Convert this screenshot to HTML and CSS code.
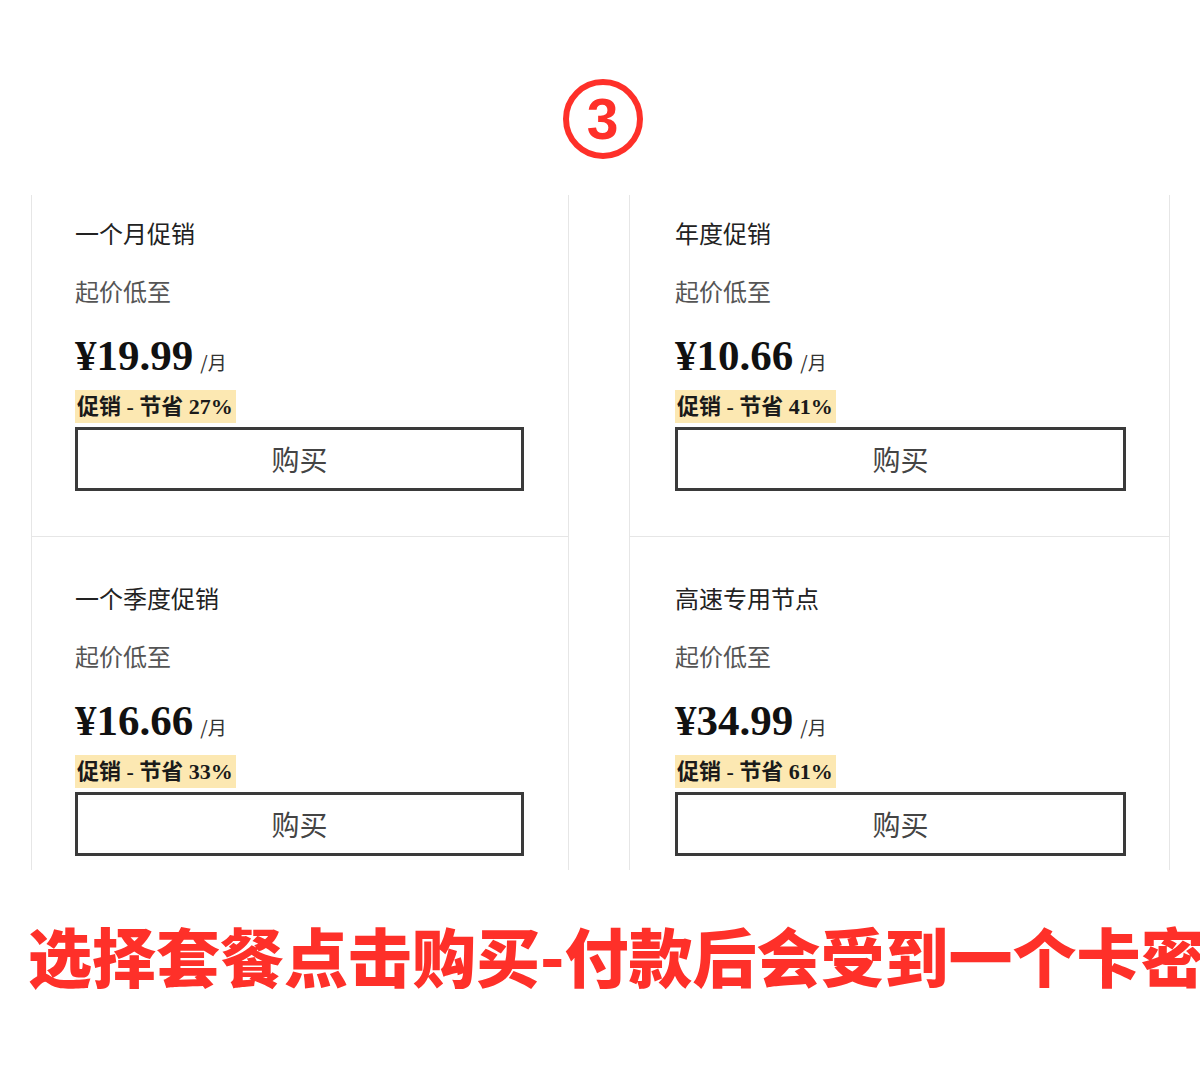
FILE: index.html
```html
<!DOCTYPE html>
<html lang="zh-CN">
<head>
    <meta charset="UTF-8">
    <meta name="viewport" content="width=device-width, initial-scale=1.0">
    <title>选择套餐</title>
    <link rel="stylesheet" href="styles.css">
</head>
<body>
    <header class="step">
        <div class="step-badge">3</div>
    </header>

    <section class="plans">
        <div class="plan-col">
            <div class="plan plan-top">
                <h3 class="plan-name">一个月促销</h3>
                <p class="plan-from">起价低至</p>
                <div class="plan-price"><span class="amount">¥19.99</span><span class="unit">/月</span></div>
                <div class="plan-save"><span>促销 - 节省 27%</span></div>
                <button class="buy-btn">购买</button>
            </div>
            <div class="plan plan-bottom">
                <h3 class="plan-name">一个季度促销</h3>
                <p class="plan-from">起价低至</p>
                <div class="plan-price"><span class="amount">¥16.66</span><span class="unit">/月</span></div>
                <div class="plan-save"><span>促销 - 节省 33%</span></div>
                <button class="buy-btn">购买</button>
            </div>
        </div>

        <div class="plan-col plan-col-right">
            <div class="plan plan-top">
                <h3 class="plan-name">年度促销</h3>
                <p class="plan-from">起价低至</p>
                <div class="plan-price"><span class="amount">¥10.66</span><span class="unit">/月</span></div>
                <div class="plan-save"><span>促销 - 节省 41%</span></div>
                <button class="buy-btn">购买</button>
            </div>
            <div class="plan plan-bottom">
                <h3 class="plan-name">高速专用节点</h3>
                <p class="plan-from">起价低至</p>
                <div class="plan-price"><span class="amount">¥34.99</span><span class="unit">/月</span></div>
                <div class="plan-save"><span>促销 - 节省 61%</span></div>
                <button class="buy-btn">购买</button>
            </div>
        </div>
    </section>

    <p class="caption">选择套餐点击购买-付款后会受到一个卡密</p>
</body>
</html>
```

FILE: styles.css
```css
:root {
    --red: #fe3029;
    --line: #e6e6e6;
    --dark: #222222;
    --gray: #555555;
}

* {
    margin: 0;
    padding: 0;
    box-sizing: border-box;
}

body {
    background: #ffffff;
    color: var(--dark);
    font-family: "Noto Sans CJK SC", "Noto Sans", sans-serif;
    width: 1200px;
    height: 1065px;
    overflow: hidden;
}

.step {
    height: 195px;
    display: flex;
    justify-content: center;
    padding-top: 79px;
}

.step-badge {
    width: 80px;
    height: 80px;
    border: 6px solid var(--red);
    border-radius: 50%;
    margin-left: 5px;
    color: var(--red);
    font-family: "Liberation Sans", sans-serif;
    font-weight: 700;
    font-size: 57px;
    line-height: 68px;
    text-align: center;
}

.plans {
    display: grid;
    grid-template-columns: 538px 541px;
    gap: 60px;
    margin-left: 31px;
    height: 675px;
    overflow: hidden;
}

.plan-col {
    display: flex;
    flex-direction: column;
    border-left: 1px solid var(--line);
    border-right: 1px solid var(--line);
}

.plan {
    padding-left: 43px;
    padding-right: 43px;
}

.plan-col-right .plan {
    padding-left: 45px;
}

.plan-top {
    padding-top: 23px;
    padding-bottom: 45px;
    border-bottom: 1px solid var(--line);
}

.plan-bottom {
    padding-top: 46px;
}

.plan-name {
    font-size: 24px;
    font-weight: 400;
    line-height: 30px;
    color: var(--dark);
}

.plan-from {
    margin-top: 28px;
    font-size: 24px;
    line-height: 30px;
    color: var(--gray);
}

.plan-price {
    margin-top: 26px;
    height: 48px;
    line-height: 48px;
    color: #111;
}

.amount {
    font-family: "Liberation Serif", serif;
    font-weight: 700;
    font-size: 43px;
}

.unit {
    margin-left: 7px;
    font-size: 19px;
    color: #333;
}

.plan-save {
    margin-top: 10px;
    height: 33px;
}

.plan-save span {
    display: inline-block;
    background: #fce8b2;
    padding: 0 3px 0 2px;
    font-family: "Liberation Serif", "Noto Sans CJK SC", serif;
    font-weight: 700;
    font-size: 22px;
    line-height: 33px;
    color: #1a1a1a;
}

.buy-btn {
    display: block;
    margin-top: 4px;
    width: 449px;
    height: 64px;
    border: 3px solid #3a3a3a;
    background: #fff;
    font-family: "Noto Sans CJK SC", sans-serif;
    font-size: 28px;
    color: #444;
    cursor: pointer;
}

.plan-col-right .buy-btn {
    width: 451px;
}

.caption {
    margin-top: 46px;
    padding-left: 28px;
    white-space: nowrap;
    font-size: 64px;
    font-weight: 900;
    line-height: 76px;
    color: var(--red);
}
```
